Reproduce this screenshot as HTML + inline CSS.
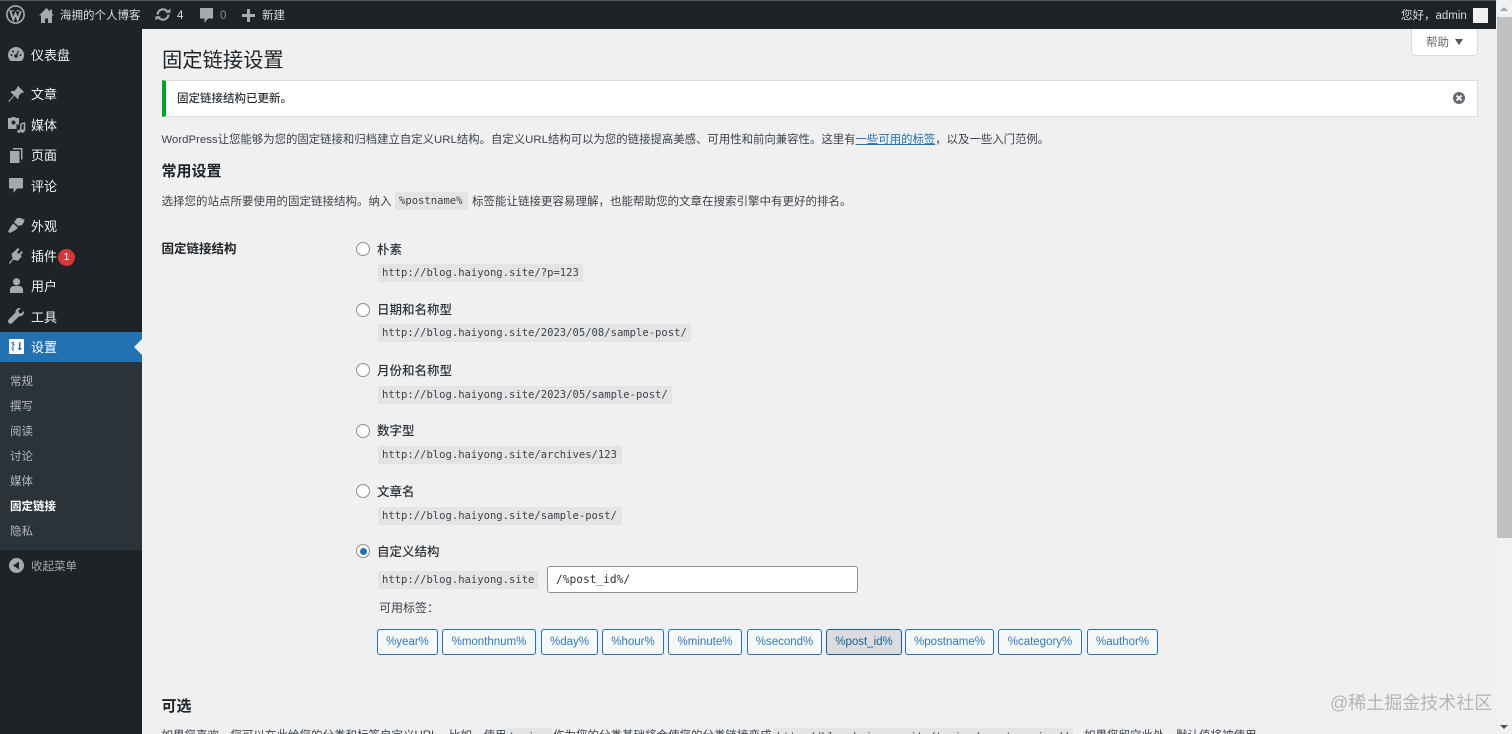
<!DOCTYPE html>
<html lang="zh-CN"><head><meta charset="utf-8"><title>固定链接设置</title>
<style>
*{box-sizing:border-box}
html,body{margin:0;padding:0;width:1512px;height:734px;overflow:hidden;background:#f0f0f1}
body{font-family:"Liberation Sans","Noto Sans CJK SC",sans-serif;font-size:12px;color:#3c434a;position:relative}
.a{position:absolute;white-space:nowrap;line-height:1}
#bar{position:absolute;left:0;top:0;width:1496px;height:29px;background:#1d2327;border-top:1px solid #555}
#side{position:absolute;left:0;top:29px;width:142px;height:705px;background:#1d2327}
#sub{position:absolute;left:0;top:362px;width:142px;height:188px;background:#2c3338}
#cur{position:absolute;left:0;top:332px;width:142px;height:30px;background:#2271b1}
.m{color:#f0f0f1;font-size:13px}
.s{color:#b4b9be;font-size:11.5px;left:10px}
.bt{color:#dcdcde;font-size:11.5px}
svg{position:absolute;overflow:visible}
.code{position:absolute;background:#e4e4e5;height:18px;font-family:"DejaVu Sans Mono",monospace;font-size:10.55px;line-height:18px;color:#3c434a;padding-left:4px;white-space:nowrap}
.r{position:absolute;left:356px;width:14px;height:14px;border-radius:50%;border:1px solid #8c8f94;background:#fff}
.l{font-size:12.5px;left:377px;color:#2c3338;font-weight:500}
.tag{position:absolute;top:629px;height:26px;border:1px solid #2271b1;border-radius:3px;background:#f6f7f7;color:#2f7ab8;font-size:11.5px;line-height:24px;text-align:center;white-space:nowrap}
</style></head><body>
<div id="bar"></div>
<div id="side"></div>
<div id="cur"></div>
<div id="sub"></div>

<!-- admin bar icons -->
<svg style="left:6px;top:5px" width="19" height="19" viewBox="0 0 19 19"><circle cx="9.5" cy="9.5" r="8.6" fill="none" stroke="#a7aaad" stroke-width="1.6"/><path d="M4.300 6.200L7.300 14.600 9.500 8.800 11.700 14.600 14.800 6.200" fill="none" stroke="#a7aaad" stroke-width="2"/><path d="M3 5.800h5M10.500 5.800h3" stroke="#a7aaad" stroke-width="1"/></svg>
<svg style="left:39px;top:8px" width="15" height="15" viewBox="0 0 15 15"><path d="M7.500 0L0 7.500h2V15h4v-4.500h3V15h4V7.500h2L13 5.500V1.500h-2v2z" fill="#a7aaad"/></svg>
<svg style="left:155px;top:7px" width="16" height="15" viewBox="0 0 16 15"><path d="M2.500 7.500a5.500 5.500 0 0 1 10-2.800" fill="none" stroke="#a7aaad" stroke-width="2.200"/><path d="M13.500 7.500a5.500 5.500 0 0 1-10 2.800" fill="none" stroke="#a7aaad" stroke-width="2.200"/><path d="M10 5.800h5.500V1.500zM6 9.200H.5v4.300z" fill="#a7aaad"/></svg>
<svg style="left:199px;top:8px" width="15" height="16" viewBox="0 0 15 16"><path d="M1 0h13v10.500H9L5.500 15v-4.500H1z" fill="#a7aaad"/></svg>
<svg style="left:242px;top:9px" width="13" height="13" viewBox="0 0 13 13"><path d="M5 0h3v5h5v3H8v5H5V8H0V5h5z" fill="#a7aaad"/></svg>
<div class="a bt" style="left:60px;top:11px">海拥的个人博客</div>
<div class="a bt" style="left:177px;top:11px">4</div>
<div class="a" style="left:220px;top:11px;color:#8c8f94;font-size:11.500px">0</div>
<div class="a bt" style="left:262px;top:11px">新建</div>
<div class="a bt" style="left:1401px;top:11px">您好，admin</div>
<div style="position:absolute;left:1473px;top:8px;width:15px;height:15px;background:#f0f0f1"></div>

<!-- side icons -->
<svg style="left:8px;top:47px" width="16" height="14" viewBox="0 0 16 14"><path d="M8 0a8 8 0 0 0-8 8c0 2.300 1 4.400 2.500 6h11A8 8 0 0 0 16 8a8 8 0 0 0-8-8z" fill="#a7aaad"/><circle cx="8" cy="9" r="1.800" fill="#1d2327"/><path d="M8 9l2.500-5" stroke="#1d2327" stroke-width="1.200"/><circle cx="3.500" cy="8" r="1" fill="#1d2327"/><circle cx="5" cy="4.500" r="1" fill="#1d2327"/><circle cx="12.500" cy="8" r="1" fill="#1d2327"/></svg>
<svg style="left:8px;top:86px" width="16" height="16" viewBox="0 0 16 16"><path d="M10 0l6 6-1.200 1-1-.5L10.500 10c.5 1.500.2 2.500-.7 3.300L6.500 9.800 1 16l-.8-.8 5.500-6L2.500 6c.8-.9 2-1.200 3.500-.7l3.300-3.400-.4-.9z" fill="#a7aaad"/></svg>
<svg style="left:8px;top:117px" width="17" height="16" viewBox="0 0 17 16"><path d="M0 1h3l1-1h3l1 1h3v6.500H8.500V12H0z" fill="#a7aaad"/><circle cx="5.500" cy="5.500" r="2" fill="#1d2327"/><path d="M12.800 7l3.700-1v8" fill="none" stroke="#a7aaad" stroke-width="1.500"/><path d="M12.800 7v7" fill="none" stroke="#a7aaad" stroke-width="1.500"/><circle cx="14.700" cy="14" r="1.800" fill="#a7aaad"/><circle cx="11" cy="14.300" r="1.700" fill="#a7aaad"/></svg>
<svg style="left:10px;top:148px" width="13" height="15" viewBox="0 0 13 15"><path d="M3 0h9.500v11.500H11V1.500H3z" fill="#a7aaad"/><path d="M0 3h9.500v12H0z" fill="#a7aaad"/></svg>
<svg style="left:9px;top:178px" width="14" height="15" viewBox="0 0 14 15"><path d="M1 0h12a1 1 0 0 1 1 1v8.500a1 1 0 0 1-1 1H8L4.500 15v-4.500H1a1 1 0 0 1-1-1V1a1 1 0 0 1 1-1z" fill="#a7aaad"/></svg>
<svg style="left:8px;top:218px" width="17" height="15" viewBox="0 0 17 15"><path d="M9 0h5l-.5 1.500L16.500 1 16 4l-2 3-3.500 1L6 4.500zM5 5.500l5 4L7.500 12 2 15l-2-1.500 3-5z" fill="#a7aaad"/></svg>
<svg style="left:9px;top:248px" width="15" height="16" viewBox="0 0 15 16"><path d="M9 0l1.500 1.200L8 4.500 10 6l2.500-3L14 4.200l-2.500 3.200 1.200 1-3.700 4.300-5-1L1 16l-1-1 3.500-4.500L2.500 6z" fill="#a7aaad"/></svg>
<svg style="left:9px;top:278px" width="15" height="15" viewBox="0 0 15 15"><circle cx="7.500" cy="3.800" r="3.600" fill="#a7aaad"/><path d="M1 15v-3.500C1 9.500 3 8 5 8h5c2 0 4 1.500 4 3.500V15z" fill="#a7aaad"/></svg>
<svg style="left:8px;top:308px" width="16" height="16" viewBox="0 0 16 16"><path d="M11.500 0c-2.500 0-4.300 2-4 4.500L.7 11.500c-1 1-1 2.500 0 3.500s2.500 1 3.500 0l7-6.800c2.500.3 4.800-1.500 4.800-4l-.3-1.200-2.500 2.500-2.300-.6-.6-2.300L12.800.2z" fill="#a7aaad"/></svg>
<svg style="left:9px;top:339px" width="15" height="15" viewBox="0 0 15 15"><rect width="15" height="15" rx="1" fill="#fff"/><path d="M2.500 3h2.500v1.500H2.500zM2.500 8h2.500v1.500H2.500zM3 11.800h1.500V6H6L3.800 3.800M10 3.200h1.500V9H13l-2.200 2.500L8.500 9H10z" fill="#2271b1"/></svg>
<svg style="left:9px;top:558px" width="15" height="15" viewBox="0 0 15 15"><circle cx="7.500" cy="7.500" r="7.500" fill="#a7aaad"/><path d="M10 3.500v8L4 7.500z" fill="#1d2327"/></svg>

<div class="a m" style="left:31px;top:49px">仪表盘</div>
<div class="a m" style="left:31px;top:88px">文章</div>
<div class="a m" style="left:31px;top:119px">媒体</div>
<div class="a m" style="left:31px;top:149px">页面</div>
<div class="a m" style="left:31px;top:180px">评论</div>
<div class="a m" style="left:31px;top:220px">外观</div>
<div class="a m" style="left:31px;top:250px">插件</div>
<div style="position:absolute;left:58px;top:249px;width:17px;height:17px;border-radius:50%;background:#d63638;color:#fff;font-size:10.500px;line-height:17px;text-align:center">1</div>
<div class="a m" style="left:31px;top:280px">用户</div>
<div class="a m" style="left:31px;top:311px">工具</div>
<div class="a m" style="left:31px;top:341px;color:#fff">设置</div>
<div style="position:absolute;left:134px;top:339px;border:8px solid transparent;border-left:0;border-right-color:#f0f0f1"></div>
<div class="a s" style="top:377px">常规</div>
<div class="a s" style="top:402px">撰写</div>
<div class="a s" style="top:427px">阅读</div>
<div class="a s" style="top:452px">讨论</div>
<div class="a s" style="top:477px">媒体</div>
<div class="a s" style="top:502px;color:#fff;font-weight:bold">固定链接</div>
<div class="a s" style="top:527px">隐私</div>
<div class="a" style="left:31px;top:562px;color:#a7aaad;font-size:11.500px">收起菜单</div>

<!-- help -->
<div style="position:absolute;left:1411px;top:29px;width:67px;height:27px;background:#fff;border:1px solid #dcdcde;border-top:0;border-radius:0 0 4px 4px"></div>
<div class="a" style="left:1426px;top:38px;color:#646970;font-size:11.500px">帮助</div>
<div style="position:absolute;left:1455px;top:39px;border:4.500px solid transparent;border-top:6px solid #50575e;border-bottom:0"></div>

<div class="a" style="left:162px;top:51px;font-size:20.300px;color:#1d2327">固定链接设置</div>

<!-- notice -->
<div style="position:absolute;left:162px;top:80px;width:1316px;height:37px;background:#fff;border:1px solid #dcdcde;border-left:4px solid #00a32a"></div>
<div class="a" style="left:177px;top:94px;font-size:11.500px;color:#2c3338;font-weight:500">固定链接结构已更新。</div>
<svg style="left:1453px;top:92px" width="12" height="12" viewBox="0 0 12 12"><circle cx="6" cy="6" r="6" fill="#646970"/><path d="M3.500 3.500l5 5M8.500 3.500l-5 5" stroke="#fff" stroke-width="1.800"/></svg>

<div class="a" style="left:161.500px;top:135px;font-size:11.400px">WordPress让您能够为您的固定链接和归档建立自定义URL结构。自定义URL结构可以为您的链接提高美感、可用性和前向兼容性。这里有<span style="color:#2271b1;text-decoration:underline">一些可用的标签</span>，以及一些入门范例。</div>

<div class="a" style="left:161.500px;top:164px;font-size:15px;font-weight:bold;color:#1d2327">常用设置</div>
<div class="a" style="left:161.500px;top:197px;font-size:11.500px">选择您的站点所要使用的固定链接结构。纳入</div>
<div class="code" style="left:395px;top:192px;width:73px">%postname%</div>
<div class="a" style="left:472px;top:197px;font-size:11.500px">标签能让链接更容易理解，也能帮助您的文章在搜索引擎中有更好的排名。</div>

<div class="a" style="left:161.500px;top:243px;font-size:12.500px;font-weight:bold;color:#1d2327">固定链接结构</div>

<div class="r" style="top:242px"></div><div class="a l" style="top:244px">朴素</div>
<div class="code" style="left:378px;top:264px;width:205px">http://blog.haiyong.site/?p=123</div>
<div class="r" style="top:303px"></div><div class="a l" style="top:304px">日期和名称型</div>
<div class="code" style="left:378px;top:324px;width:313px">http://blog.haiyong.site/2023/05/08/sample-post/</div>
<div class="r" style="top:363px"></div><div class="a l" style="top:365px">月份和名称型</div>
<div class="code" style="left:378px;top:386px;width:294px">http://blog.haiyong.site/2023/05/sample-post/</div>
<div class="r" style="top:424px"></div><div class="a l" style="top:425px">数字型</div>
<div class="code" style="left:378px;top:446px;width:244px">http://blog.haiyong.site/archives/123</div>
<div class="r" style="top:484px"></div><div class="a l" style="top:486px">文章名</div>
<div class="code" style="left:378px;top:507px;width:244px">http://blog.haiyong.site/sample-post/</div>
<div class="r" style="top:544px"><div style="position:absolute;left:2.500px;top:2.500px;width:7px;height:7px;border-radius:50%;background:#2271b1"></div></div><div class="a l" style="top:546px">自定义结构</div>
<div class="code" style="left:378px;top:571px;width:160px">http://blog.haiyong.site</div>
<div style="position:absolute;left:547px;top:566px;width:311px;height:27px;background:#fff;border:1px solid #8c8f94;border-radius:3px;font-family:'DejaVu Sans Mono',monospace;font-size:11.200px;line-height:25px;padding-left:8px;color:#2c3338">/%post_id%/</div>
<div class="a" style="left:379px;top:602px;font-size:12px">可用标签：</div>

<div class="tag" style="left:377px;width:61px">%year%</div>
<div class="tag" style="left:442px;width:94px">%monthnum%</div>
<div class="tag" style="left:541px;width:57px">%day%</div>
<div class="tag" style="left:602px;width:62px">%hour%</div>
<div class="tag" style="left:668px;width:74px">%minute%</div>
<div class="tag" style="left:747px;width:75px">%second%</div>
<div class="tag" style="left:826px;width:76px;background:#dcdcde;color:#135e96;border-color:#135e96">%post_id%</div>
<div class="tag" style="left:905px;width:89px">%postname%</div>
<div class="tag" style="left:998px;width:84px">%category%</div>
<div class="tag" style="left:1087px;width:71px">%author%</div>

<div class="a" style="left:161.500px;top:699px;font-size:15px;font-weight:bold;color:#1d2327">可选</div>
<div class="a" style="left:161.500px;top:731px;font-size:11.500px">如果您喜欢，您可以在此给您的分类和标签自定义URL。比如，使用</div>
<div class="code" style="left:505px;top:728px;width:47px">topics</div>
<div class="a" style="left:553px;top:731px;font-size:11.500px">作为您的分类基础将会使您的分类链接变成</div>
<div class="code" style="left:773px;top:728px;width:300px">http://blog.haiyong.site/topics/uncategorized/</div>
<div class="a" style="left:1084px;top:731px;font-size:11.500px">如果您留空此处，默认值将被使用。</div>

<!-- watermark -->
<div class="a" style="left:1330px;top:694px;font-size:18px;color:#b5b5b6">@稀土掘金技术社区</div>

<!-- scrollbar -->
<div style="position:absolute;left:1497px;top:0;width:15px;height:734px;background:#f1f1f1"></div>
<div style="position:absolute;left:1497px;top:17px;width:15px;height:521px;background:#c1c1c1"></div>
<div style="position:absolute;left:1500px;top:7px;border:4px solid transparent;border-bottom:4px solid #a3a3a3;border-top:0"></div>
<div style="position:absolute;left:1500px;top:725px;border:4px solid transparent;border-top:4px solid #505050;border-bottom:0"></div>
</body></html>
